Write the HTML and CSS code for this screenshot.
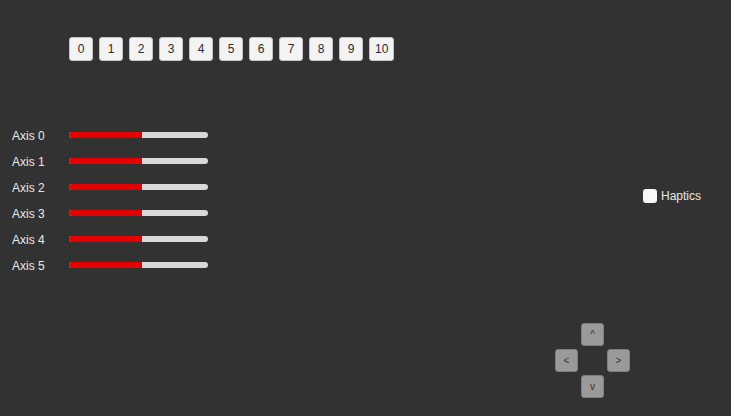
FILE: index.html
```html
<!DOCTYPE html>
<html>
<head>
<meta charset="utf-8">
<link rel="stylesheet" href="styles.css">
</head>
<body>
<div class="page">
  <div class="buttons">
    <div class="btn">0</div><div class="btn">1</div><div class="btn">2</div><div class="btn">3</div><div class="btn">4</div><div class="btn">5</div><div class="btn">6</div><div class="btn">7</div><div class="btn">8</div><div class="btn">9</div><div class="btn">10</div>
  </div>
  <div class="middle">
    <div class="axes">
      <div class="axis"><span class="label">Axis 0</span><div class="track"><div class="fill" style="width:73px"></div></div></div>
      <div class="axis"><span class="label">Axis 1</span><div class="track"><div class="fill" style="width:73px"></div></div></div>
      <div class="axis"><span class="label">Axis 2</span><div class="track"><div class="fill" style="width:73px"></div></div></div>
      <div class="axis"><span class="label">Axis 3</span><div class="track"><div class="fill" style="width:73px"></div></div></div>
      <div class="axis"><span class="label">Axis 4</span><div class="track"><div class="fill" style="width:73px"></div></div></div>
      <div class="axis"><span class="label">Axis 5</span><div class="track"><div class="fill" style="width:73px"></div></div></div>
    </div>
    <label class="haptics"><span class="box"></span><span>Haptics</span></label>
  </div>
  <div class="dpad">
    <div class="dbtn up">^</div>
    <div class="dbtn left">&lt;</div>
    <div class="dbtn right">&gt;</div>
    <div class="dbtn down">v</div>
  </div>
</div>
</body>
</html>
```

FILE: styles.css
```css
html, body {
  margin: 0;
  padding: 0;
  background: #323232;
}
body {
  width: 731px;
  height: 416px;
  overflow: hidden;
  font-family: "Liberation Sans", Arial, sans-serif;
  font-size: 12px;
  color: #e8e8e8;
}
.page {
  padding-top: 37px;
}
.buttons {
  display: flex;
  gap: 6px;
  padding-left: 69px;
}
.btn {
  box-sizing: border-box;
  min-width: 24px;
  height: 24px;
  padding: 0 5px;
  background: #f3f3f3;
  border: 1px solid #c4c4c4;
  border-radius: 3px;
  color: #2a2a2a;
  display: flex;
  align-items: center;
  justify-content: center;
}
.middle {
  display: flex;
  align-items: flex-start;
  justify-content: space-between;
  margin-top: 61px;
}
.axes {
  display: flex;
  flex-direction: column;
  padding-left: 12px;
}
.axis {
  height: 26px;
  display: flex;
  align-items: center;
}
.label {
  width: 57px;
  padding-top: 1px;
}
.track {
  width: 139px;
  height: 6px;
  border-radius: 3px;
  background: #d9d9d9;
  overflow: hidden;
}
.fill {
  height: 100%;
  background: #e30000;
}
.haptics {
  display: flex;
  align-items: center;
  gap: 4px;
  margin-top: 67px;
  margin-right: 30px;
  height: 14px;
}
.box {
  width: 14px;
  height: 14px;
  background: #f7f7f7;
  border-radius: 3px;
}
.dpad {
  display: grid;
  grid-template-columns: repeat(3, 23px);
  grid-template-rows: repeat(3, 23px);
  gap: 3px;
  margin-left: 555px;
  margin-top: 45px;
  width: max-content;
}
.dbtn {
  background: #9a9a9a;
  border: 1px solid #7e7e7e;
  box-sizing: border-box;
  border-radius: 3px;
  color: #333;
  font-size: 10px;
  display: flex;
  align-items: center;
  justify-content: center;
}
.up { grid-column: 2; grid-row: 1; }
.left { grid-column: 1; grid-row: 2; }
.right { grid-column: 3; grid-row: 2; }
.down { grid-column: 2; grid-row: 3; }
```
